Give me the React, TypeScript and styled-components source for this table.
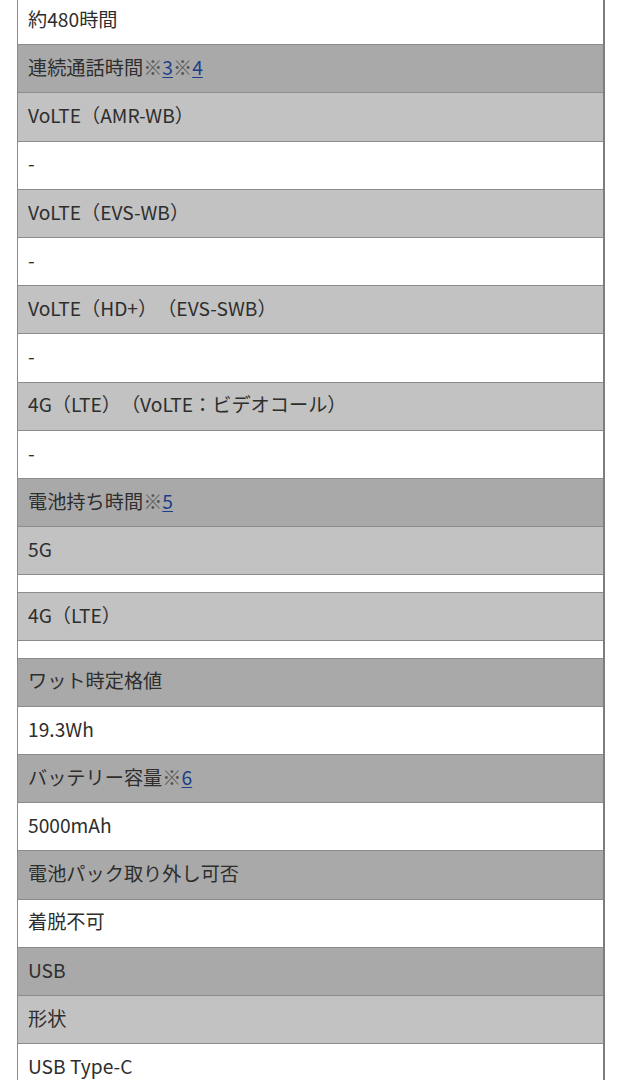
import React from "react";
import styled, { createGlobalStyle } from "styled-components";

const GlobalStyle = createGlobalStyle`
  html, body {
    margin: 0;
    padding: 0;
    background: #ffffff;
  }
  body {
    font-family: "Noto Sans CJK JP", "Noto Sans", sans-serif;
    color: #333333;
  }
`;

const SpecSt = styled.div`
  margin: -3px 17px 0;
  border-left: 1px solid #8a8a8a;
  border-right: 2px solid #7d7d7d;
  font-size: 19.2px;
  line-height: 1.6;
  text-spacing-trim: space-all;
`;

type Kind = "head" | "sub" | "value";

const Cell = styled.div<{ $kind: Kind }>`
  padding: 6.8px 10px 9.7px;
  border-bottom: 1px solid #8c8c8c;
  background: ${(p) =>
    p.$kind === "head" ? "#a9a9a9" : p.$kind === "sub" ? "#c2c2c2" : "#ffffff"};
  color: #2e2e2e;
  white-space: nowrap;

  a {
    color: #1b3f8a;
    text-decoration: underline;
    text-underline-offset: 2px;
  }
`;

const Note = styled.span`
  color: #555555;
`;

interface Spec {
  kind: Kind;
  text: React.ReactNode;
}

const rows: Spec[] = [
  { kind: "value", text: "約480時間" },
  {
    kind: "head",
    text: (
      <>
        連続通話時間<Note>※</Note>
        <a href="#n3">3</a>
        <Note>※</Note>
        <a href="#n4">4</a>
      </>
    ),
  },
  { kind: "sub", text: "VoLTE（AMR-WB）" },
  { kind: "value", text: "-" },
  { kind: "sub", text: "VoLTE（EVS-WB）" },
  { kind: "value", text: "-" },
  { kind: "sub", text: "VoLTE（HD+）（EVS-SWB）" },
  { kind: "value", text: "-" },
  { kind: "sub", text: "4G（LTE）（VoLTE：ビデオコール）" },
  { kind: "value", text: "-" },
  {
    kind: "head",
    text: (
      <>
        電池持ち時間<Note>※</Note>
        <a href="#n5">5</a>
      </>
    ),
  },
  { kind: "sub", text: "5G" },
  { kind: "value", text: "" },
  { kind: "sub", text: "4G（LTE）" },
  { kind: "value", text: "" },
  { kind: "head", text: "ワット時定格値" },
  { kind: "value", text: "19.3Wh" },
  {
    kind: "head",
    text: (
      <>
        バッテリー容量<Note>※</Note>
        <a href="#n6">6</a>
      </>
    ),
  },
  { kind: "value", text: "5000mAh" },
  { kind: "head", text: "電池パック取り外し可否" },
  { kind: "value", text: "着脱不可" },
  { kind: "head", text: "USB" },
  { kind: "sub", text: "形状" },
  { kind: "value", text: "USB Type-C" },
];

export default function App() {
  return (
    <>
      <GlobalStyle />
      <SpecSt>
        {rows.map((r, i) => (
          <Cell key={i} $kind={r.kind}>
            {r.text}
          </Cell>
        ))}
      </SpecSt>
    </>
  );
}
